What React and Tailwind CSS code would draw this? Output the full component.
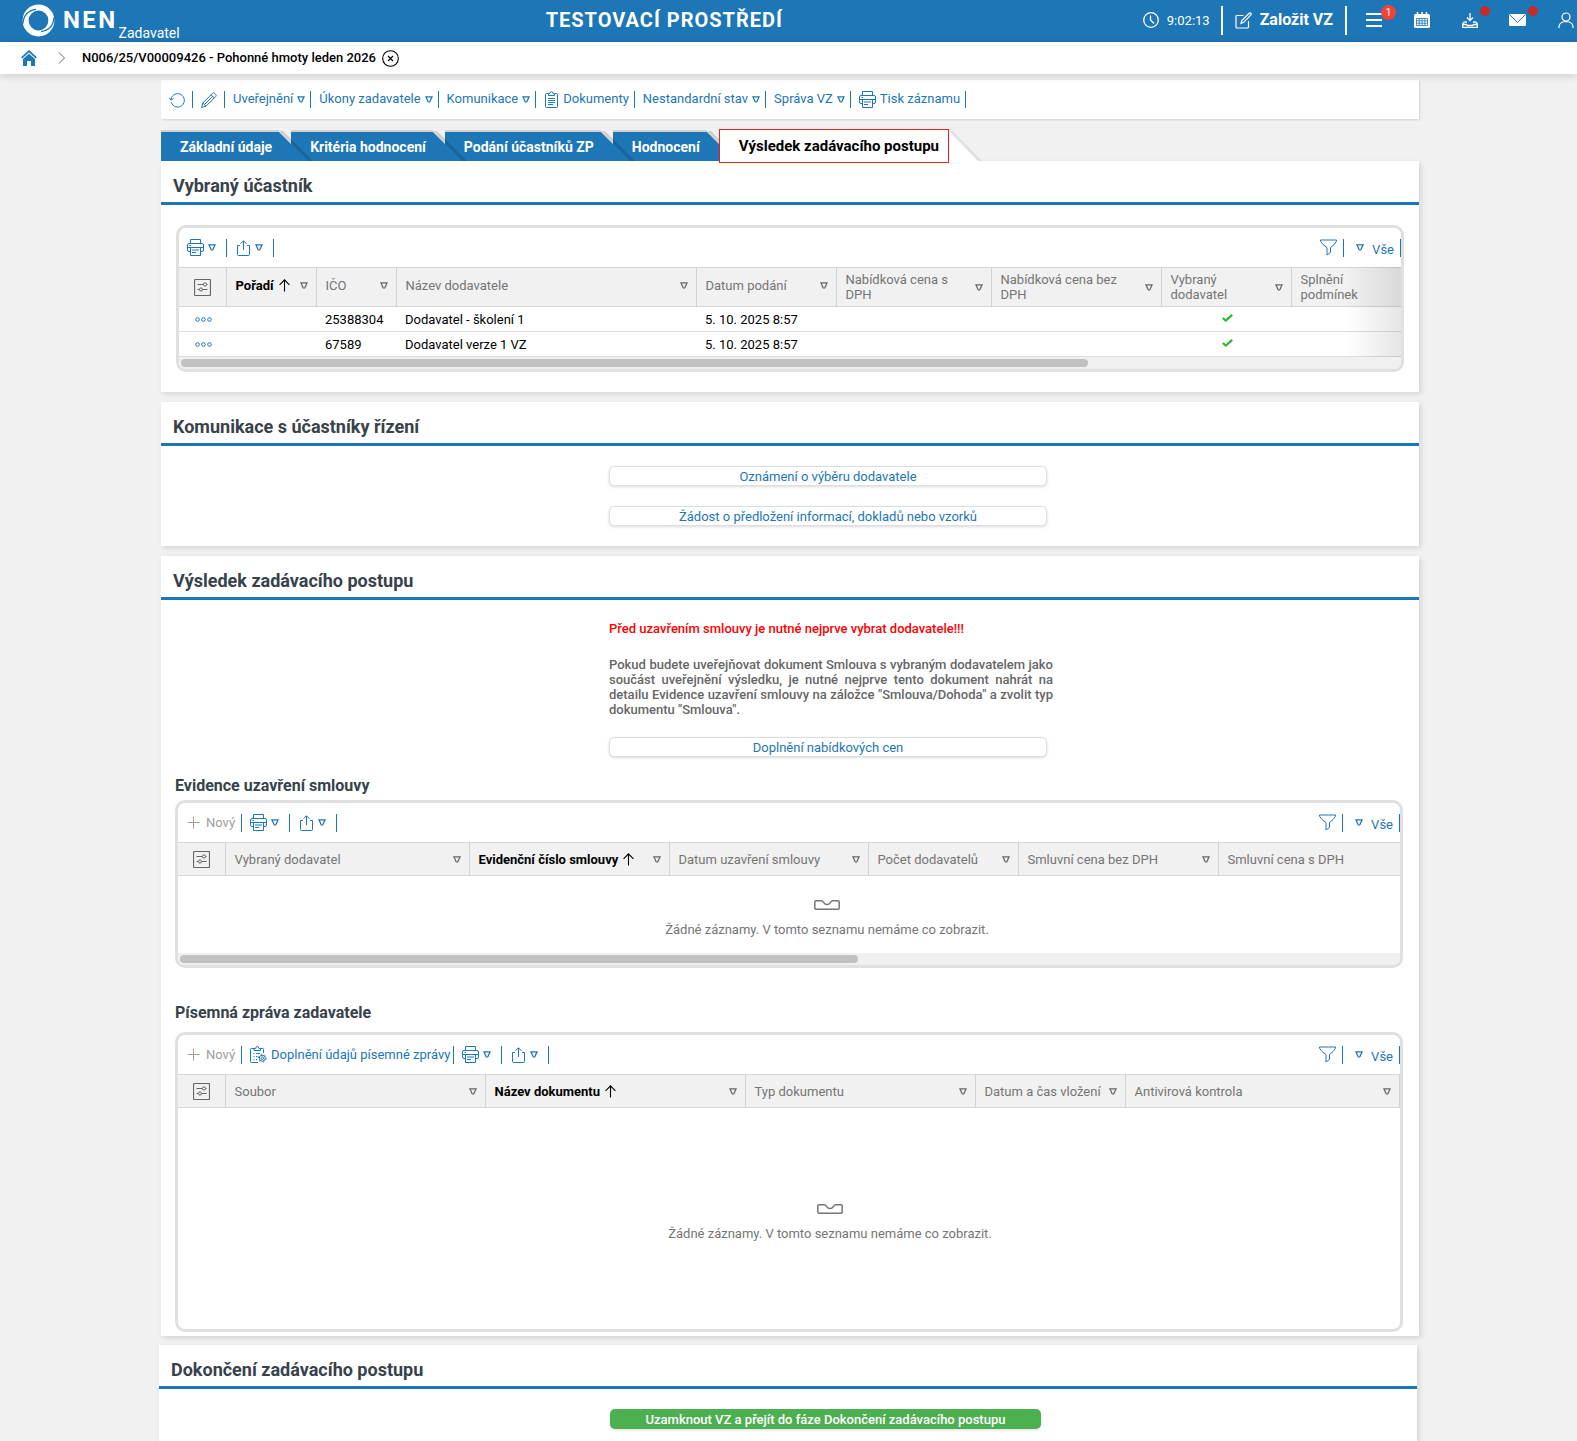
import React from 'react';
import clsx from 'clsx';


const Icon = ({ size = 'size-4', box = '0 0 16 16', children }) => (
  <svg className={clsx(size, 'shrink-0')} viewBox={box} fill="none" stroke="currentColor" strokeWidth="1" aria-hidden="true">
    {children}
  </svg>
)

const Triangle = () => (
  <Icon size="h-[7px] w-2" box="0 0 8 7">
    <path d="M.9 .8H7.1L4.9 5.6Q4 6.6 3.1 5.6Z" strokeWidth="1.2" />
  </Icon>
)

const PrintIcon = () => (
  <Icon size="size-[17px]" box="0 0 17 17">
    <path d="M3.5 5V.5H13.5V5M3.5 12.5H2A1.5 1.5 0 0 1 .5 11V6A1.5 1.5 0 0 1 2 4.5H15A1.5 1.5 0 0 1 16.5 6V11A1.5 1.5 0 0 1 15 12.5H13.5M1 8.5H16M3.5 8.5V16.5H13.5V8.5M5 11H12M5 13.5H9M2.5 6.5H4" />
  </Icon>
)

const ShareIcon = () => (
  <Icon>
    <path d="M5 5.5H2.5V14.5Q2.5 15.5 3.5 15.5H13.5Q14.5 15.5 14.5 14.5V5.5H12M8.5 10V.8M5.5 3.8L8.5 .8L11.5 3.8" />
  </Icon>
)

const FilterIcon = () => (
  <Icon size="size-[17px]" box="0 0 17 17">
    <path d="M.5 1H16.5V2.2Q15 5.5 10.5 8.5V13.5L7 16V8.5Q2 5.5 .5 2.2Z" />
  </Icon>
)

const SettingsIcon = () => (
  <Icon size="size-[17px]" box="0 0 17 17">
    <rect x=".5" y=".5" width="16" height="16" rx="1" strokeWidth="1.2" />
    <path d="M3.5 5.5H9.3M12.7 5.5H13.5M3.5 10.5H5.3M8.7 10.5H13.5" strokeWidth="1.2" />
    <circle cx="11" cy="5.5" r="1.6" />
    <circle cx="7" cy="10.5" r="1.6" />
  </Icon>
)

const DocIcon = () => (
  <Icon size="h-[17px] w-[15px]" box="0 0 15 17">
    <path d="M4 2.5H2.5Q1.5 2.5 1.5 3.5V15.5Q1.5 16.5 2.5 16.5H12.5Q13.5 16.5 13.5 15.5V3.5Q13.5 2.5 12.5 2.5H11M4.5 4.5V2.5H6Q6 .6 7.5 .6Q9 .6 9 2.5H10.5V4.5ZM4 7.5H11M4 9.5H11M4 11.5H11M4 13.5H9" />
  </Icon>
)

const DocGearIcon = () => (
  <Icon size="size-[17px]" box="0 0 17 17">
    <path d="M4 2.5H1.5Q.5 2.5 .5 3.5V15.5Q.5 16.5 1.5 16.5H8M11 2.5H12.8Q13.5 2.5 13.5 3.5V7M4 4.5V2.5H5.5Q5.8 .6 7.2 .6Q8.6 .6 9 2.5H10.5V4.5ZM3.5 7.5H4.5M6 7.5H10M3.5 10.5H4.5M6 10.5H7.5M3.5 13.5H4.5M6 13.5H7" />
    <circle cx="12.3" cy="12.2" r="1.3" />
    <circle cx="12.3" cy="12.2" r="3" />
    <circle cx="12.3" cy="12.2" r="3.9" strokeDasharray="1.6 2.48" />
  </Icon>
)

const PlusIcon = () => (
  <Icon size="size-[13px]" box="0 0 13 13">
    <path d="M6.5 .5V12.5M.5 6.5H12.5" />
  </Icon>
)

const UpArrow = () => (
  <Icon size="h-[13px] w-[11px]" box="0 0 11 13">
    <path d="M5.5 12.5V1M.6 5.8L5.5 .9L10.4 5.8" strokeWidth="1.1" />
  </Icon>
)

const InboxIcon = () => (
  <Icon size="h-[10px] w-[26px]" box="0 0 26 10">
    <path d="M2 .8H7.5Q8.5 .8 9.5 2.3Q11 4.5 13 4.5Q15 4.5 16.5 2.3Q17.5 .8 18.5 .8H24Q25.2 .8 25.2 2V8Q25.2 9.2 24 9.2H2Q.8 9.2 .8 8V2Q.8 .8 2 .8Z" strokeWidth="1.5" />
  </Icon>
)

const CheckIcon = () => (
  <svg className="h-2 w-[11px]" viewBox="0 0 11 8" fill="none" stroke="#2db82d" strokeWidth="2.2" role="img" aria-label="Ano">
    <path d="M.8 4L3.8 6.6L10.2 .9" />
  </svg>
)

const DotsIcon = () => (
  <Icon size="h-[5px] w-[17px]" box="0 0 17 5">
    <circle cx="2.5" cy="2.5" r="1.8" />
    <circle cx="8.5" cy="2.5" r="1.8" />
    <circle cx="14.5" cy="2.5" r="1.8" />
  </Icon>
)


const Header = () => (
  <header className="flex h-[42px] items-center justify-between overflow-hidden bg-[#1d76b5] text-white">
    <div className="flex pl-[22px]">
      <svg className="mt-1 size-[33px]" viewBox="0 0 33 33" aria-hidden="true">
        <circle cx="16.5" cy="16.5" r="12.9" fill="none" stroke="#fff" strokeWidth="6" />
        <path d="M1 19.5C1.5 12 6 6.5 14 5.4M32 13.5C31.5 21 27 26.5 19 27.6" fill="none" stroke="#1d76b5" strokeWidth="1.3" />
      </svg>
      <span className="ml-2 mt-0.5 text-2xl font-bold leading-9 tracking-widest">NEN</span>
      <span className="ml-px mt-[23px] text-sm leading-5">Zadavatel</span>
    </div>
    <div className="pb-0.5 pl-1.5 text-xl font-bold tracking-wider">TESTOVACÍ PROSTŘEDÍ</div>
    <div className="-mr-[13px] flex items-center justify-end pb-0.5">
      <Icon>
        <circle cx="8" cy="8" r="7.3" strokeWidth="1.3" />
        <path d="M7.5 3.5V8L11 11.5" strokeWidth="1.3" />
      </Icon>
      <span className="ml-2 text-[13px]">9:02:13</span>
      <button className="ml-[11px] flex h-[29px] items-center gap-2 border-x-2 border-white px-3 text-base font-bold">
        <Icon size="size-[17px]" box="0 0 17 17">
          <path d="M8.5 3.5H2Q1 3.5 1 4.5V15Q1 16 2 16H12.5Q13.5 16 13.5 15V9M6 11.5L6.8 8.5L14.2 1.2Q15 .6 15.8 1.3Q16.6 2 15.9 2.9L8.7 10.3Z" strokeWidth="1.2" />
        </Icon>
        Založit VZ
      </button>
      <nav className="ml-[3px] flex">
        <button aria-label="Menu" className="relative flex w-12 items-center justify-center">
          <Icon><path d="M0 2H16M0 8H16M0 14H16" strokeWidth="2" /></Icon>
          <span className="absolute -top-[7px] right-0.5 size-[15px] rounded-full bg-[#f44336] text-center text-[10px] leading-[15px]">1</span>
        </button>
        <button aria-label="Kalendář" className="flex w-12 justify-center">
          <Icon>
            <rect x="0" y="2" width="16" height="14" rx="1.5" fill="currentColor" stroke="none" />
            <path d="M3.5 0V4M12.5 0V4M8 0V4" strokeWidth="1.5" />
            <path d="M2.5 6.5H13.5V13.5H2.5ZM2.5 8.8H13.5M2.5 11.2H13.5M5.2 6.5V13.5M8 6.5V13.5M10.8 6.5V13.5" stroke="#1d76b5" strokeWidth=".8" />
          </Icon>
        </button>
        <button aria-label="Stažené soubory" className="relative flex w-12 justify-center">
          <Icon>
            <path d="M8 1V8M5 5.5L8 8.5L11 5.5M5 10L2 10.2L.7 12V15.3H15.3V12L14 10.2L11 10M1 12.5H4.5L5.5 13.5H10.5L11.5 12.5H15" strokeWidth="1.3" />
          </Icon>
          <span className="absolute -top-1.5 right-1 size-2.5 rounded-full bg-[#c92a2a]" />
        </button>
        <button aria-label="Zprávy" className="relative flex w-12 items-center justify-center">
          <Icon size="h-3 w-[17px]" box="0 0 17 12">
            <rect width="17" height="12" rx="1.5" fill="currentColor" stroke="none" />
            <path d="M1 1L8.5 8.3L16 1" stroke="#1d76b5" />
          </Icon>
          <span className="absolute -top-1.5 right-1 size-2.5 rounded-full bg-[#c92a2a]" />
        </button>
        <button aria-label="Uživatel" className="flex w-12 justify-center">
          <Icon>
            <circle cx="8" cy="5" r="4" strokeWidth="1.2" />
            <path d="M1 16V14.5Q1.5 9.7 8 9.5Q14.5 9.7 15 14.5V16" strokeWidth="1.2" />
          </Icon>
        </button>
      </nav>
    </div>
  </header>
)

const Breadcrumb = () => (
  <nav className="relative flex h-8 items-center bg-white pl-[21px] shadow-[0_2px_8px_rgba(0,0,0,0.15)]">
    <a href="#" aria-label="Domů">
      <svg className="h-4 w-4" viewBox="0 0 16 16" aria-hidden="true">
        <path d="M.7 7.8L8 1.2L15.3 7.8" fill="none" stroke="#1d76b5" strokeWidth="1.8" />
        <path d="M2 9L8 3.8L14 9V16H10V11H6V16H2Z" fill="#1d76b5" />
      </svg>
    </a>
    <svg className="ml-[21px] h-3 w-2" viewBox="0 0 8 12" fill="none" stroke="#666" aria-hidden="true">
      <path d="M1 .5L6.5 6L1 11.5" />
    </svg>
    <span className="ml-4 pb-0.5 text-[13px] font-medium text-black">N006/25/V00009426 - Pohonné hmoty leden 2026</span>
    <button aria-label="Zavřít" className="ml-1.5">
      <Icon size="size-[17px]" box="0 0 17 17">
        <circle cx="8.5" cy="8.5" r="7.8" strokeWidth="1.1" />
        <path d="M6 6L11 11M11 6L6 11" strokeWidth="1.1" />
      </Icon>
    </button>
  </nav>
)

const actions = [
  {
    label: 'Obnovit', iconOnly: true,
    icon: <Icon><path d="M2.3 10.5A6.7 6.7 0 1 0 2 7.5M0 5.8L2 8.2L4.5 6.3" /></Icon>,
  },
  {
    label: 'Upravit', iconOnly: true,
    icon: <Icon><path d="M.6 15.5L1.8 11L11.5 1.3Q12.5 .3 13.7 1.4L14.6 2.3Q15.7 3.5 14.7 4.5L5 14.2ZM1.8 11L5 14.2M10 2.8L13.2 6M3.5 12.5L12 4" /></Icon>,
  },
  { label: 'Uveřejnění', menu: true },
  { label: 'Úkony zadavatele', menu: true },
  { label: 'Komunikace', menu: true },
  { label: 'Dokumenty', icon: <DocIcon /> },
  { label: 'Nestandardní stav', menu: true },
  { label: 'Správa VZ', menu: true },
  { label: 'Tisk záznamu', icon: <PrintIcon /> },
]

const ActionBar = () => (
  <div className="flex h-[39px] items-center bg-white text-[#1d76b5] shadow-[1px_1px_2px_rgba(0,0,0,0.12)]">
    {actions.map((action) => (
      <button
        key={action.label}
        aria-label={action.label}
        className={clsx('flex h-[17px] items-center gap-1 border-r border-[#1d76b5] pl-2', action.iconOnly ? 'pr-[7px]' : 'pr-[5px]')}
      >
        {action.icon}
        {!action.iconOnly && <span className="-mt-0.5">{action.label}</span>}
        {action.menu && <Triangle />}
      </button>
    ))}
  </div>
)

const Tabs = () => (
  <div role="tablist" className="flex h-8 items-end pt-px">
    {['Základní údaje', 'Kritéria hodnocení', 'Podání účastníků ZP', 'Hodnocení'].map((label) => (
      <button key={label} role="tab" aria-selected="false" className="flex h-[31px] font-bold text-white">
        <span className="border-t-2 border-[#d2d2d2] bg-[#1d76b5] pl-[19px] pr-[7px] pt-0.5 text-sm leading-[27px]">{label}</span>
        <svg className="relative z-10 -mr-[21px] h-[31px] w-[33px]" viewBox="0 0 33 31" aria-hidden="true">
          <path d="M0 1L4 1L33 30V31H29Z" fill="#000" fillOpacity=".14" />
          <path d="M0 2L29 31H0Z" fill="#1d76b5" />
        </svg>
      </button>
    ))}
    <button role="tab" aria-selected="true" className="relative z-20 -mb-0.5 h-[34px] border border-[#ed1c24] bg-white pl-[19px] pr-[9px] text-[15px] font-bold leading-8 text-black">
      Výsledek zadávacího postupu
    </button>
    <svg className="h-[31px] w-[33px]" viewBox="0 0 33 31" aria-hidden="true">
      <path d="M0 0L3 1L33 31H29Z" fill="#dedede" />
      <path d="M0 2L29 31H0Z" fill="#fff" />
    </svg>
  </div>
)

const Card = ({ title, className, children }) => (
  <section className={clsx('bg-white shadow-[2px_2px_5px_rgba(0,0,0,0.12)]', className)}>
    <h2 className="border-b-[3px] border-[#1d76b5] px-3 pb-0.5 pt-2.5 text-lg font-bold leading-[29px] text-[#37424a]">{title}</h2>
    {children}
  </section>
)

const LinkButton = ({ children }) => (
  <button className="block h-5 w-full rounded-[5px] border border-[#dedede] bg-white pt-px font-normal leading-[18px] text-[#1d76b5] shadow-[0_1px_3px_rgba(0,0,0,0.14)]">
    {children}
  </button>
)

const tool = 'flex h-[18px] items-center gap-1 border-r border-[#1d76b5] pl-2'

const Grid = ({ name, columns, canAdd, extra, tall, children, footer }) => (
  <div className="relative overflow-hidden rounded-[10px] border-[3px] border-[#e0e0e0]">
    <div className="flex h-[39px] items-center justify-between text-[#1d76b5]">
      <div className="flex">
        {canAdd && (
          <button disabled className="flex h-[18px] items-center gap-1.5 border-r border-[#1d76b5] pl-[9px] pr-1.5 text-[#9e9e9e]">
            <PlusIcon />Nový
          </button>
        )}
        {extra && <button className={clsx(tool, 'pr-[3px]')}><DocGearIcon />{extra}</button>}
        <button aria-label="Tisk" className={clsx(tool, 'pr-2.5')}><PrintIcon /><Triangle /></button>
        <button aria-label="Export" className={clsx(tool, 'pr-2.5')}><ShareIcon /><Triangle /></button>
      </div>
      <div className="flex">
        <button aria-label="Filtr" className={clsx(tool, 'pr-1.5')}><FilterIcon /></button>
        <button className="flex h-[18px] items-center gap-2 border-r border-[#1d76b5] pl-3 pr-1.5">
          <Triangle /><span className="pt-[3px]">Vše</span>
        </button>
      </div>
    </div>
    <table aria-label={name} className="w-full table-fixed border-collapse text-left">
      <thead className="border-y border-[#d6d6d6] bg-[#f1f1f1] text-[#757575]">
        <tr className={tall ? 'h-[39px]' : 'h-[33px]'}>
          <th className="w-[47px] border-r border-[#d2d2d2] pl-px text-[#666]">
            <button aria-label="Nastavení sloupců" className="mx-auto block"><SettingsIcon /></button>
          </th>
          {columns.map((col) => (
            <th
              key={col.label}
              className={clsx('border-[#d2d2d2] pl-[9px] pr-2 font-normal', col.width, !col.open && 'border-r', tall && !col.wrap && 'pb-1')}
            >
              <div className={clsx('flex items-center', col.sorted && 'font-bold text-black')}>
                <span className={clsx('leading-[15px]', col.wrap)}>{col.label}</span>
                {col.sorted && <span className="ml-[5px]"><UpArrow /></span>}
                {!col.open && <button aria-label={'Filtrovat ' + col.label} className="ml-auto text-[#666]"><Triangle /></button>}
              </div>
            </th>
          ))}
        </tr>
      </thead>
      {children}
    </table>
    {footer}
  </div>
)

const ScrollBar = ({ width }) => (
  <div className="h-3 bg-[#f0f0f0] px-0.5 pt-0.5">
    <div className={clsx('h-2 rounded-full bg-[#c1c1c1]', width)} />
  </div>
)

const Empty = ({ className }) => (
  <div className={clsx('flex flex-col items-center justify-center gap-3 pt-2 text-[#757575]', className)}>
    <InboxIcon />
    <p>Žádné záznamy. V tomto seznamu nemáme co zobrazit.</p>
  </div>
)

const bidderColumns = [
  { label: 'Pořadí', width: 'w-[90px]', sorted: true },
  { label: 'IČO', width: 'w-20' },
  { label: 'Název dodavatele', width: 'w-[300px]' },
  { label: 'Datum podání', width: 'w-[140px]' },
  { label: 'Nabídková cena s DPH', width: 'w-[155px]', wrap: 'w-[110px]' },
  { label: 'Nabídková cena bez DPH', width: 'w-[170px]', wrap: 'w-[125px]' },
  { label: 'Vybraný dodavatel', width: 'w-[130px]', wrap: 'w-[70px]' },
  { label: 'Splnění podmínek', open: true, wrap: 'w-[70px]' },
]

const contractColumns = [
  { label: 'Vybraný dodavatel', width: 'w-[244px]' },
  { label: 'Evidenční číslo smlouvy', width: 'w-[200px]', sorted: true },
  { label: 'Datum uzavření smlouvy', width: 'w-[199px]' },
  { label: 'Počet dodavatelů', width: 'w-[150px]' },
  { label: 'Smluvní cena bez DPH', width: 'w-[200px]' },
  { label: 'Smluvní cena s DPH', open: true },
]

const reportColumns = [
  { label: 'Soubor', width: 'w-[260px]' },
  { label: 'Název dokumentu', width: 'w-[260px]', sorted: true },
  { label: 'Typ dokumentu', width: 'w-[230px]' },
  { label: 'Datum a čas vložení', width: 'w-[150px]' },
  { label: 'Antivirová kontrola' },
]

const bidders = [
  { ico: '25388304', name: 'Dodavatel - školení 1', date: '5. 10. 2025 8:57' },
  { ico: '67589', name: 'Dodavatel verze 1 VZ', date: '5. 10. 2025 8:57' },
]

const App = () => {
  return (
    <div className="min-h-screen overflow-hidden bg-[#f1f1f1] font-['Roboto','Liberation_Sans',sans-serif] text-[13px] leading-[15px]">
      <Header />
      <Breadcrumb />

      <main className="pl-[161px] pr-[158px] pt-1.5">
        <ActionBar />
        <div className="pt-2.5">
          <Tabs />
        </div>

        <Card title="Vybraný účastník">
          <div className="px-[15px] py-5">
            <Grid
              name="Vybraný účastník"
              columns={bidderColumns}
              tall
              footer={
                <>
                  <ScrollBar width="w-[74.5%]" />
                  <div className="pointer-events-none absolute bottom-3 right-0 top-[39px] w-14 bg-linear-to-r from-transparent to-black/10" />
                </>
              }
            >
              <tbody className="text-black">
                {bidders.map((row) => (
                  <tr key={row.ico} className="h-[25px] border-b border-[#dedede]">
                    <td className="pl-px text-[#1d76b5]"><button aria-label="Akce" className="mx-auto block"><DotsIcon /></button></td>
                    <td />
                    <td className="pl-[9px]">{row.ico}</td>
                    <td className="pl-[9px]">{row.name}</td>
                    <td className="pl-[9px]">{row.date}</td>
                    <td />
                    <td />
                    <td><div className="flex justify-center pb-0.5 pl-0.5"><CheckIcon /></div></td>
                    <td />
                  </tr>
                ))}
              </tbody>
            </Grid>
          </div>
        </Card>

        <Card title="Komunikace s účastníky řízení" className="mt-2.5">
          <div className="grid grid-cols-[448fr_438fr_372fr] py-5">
            <div className="col-start-2 flex flex-col gap-5">
              <LinkButton>Oznámení o výběru dodavatele</LinkButton>
              <LinkButton>Žádost o předložení informací, dokladů nebo vzorků</LinkButton>
            </div>
          </div>
        </Card>

        <Card title="Výsledek zadávacího postupu" className="mt-2.5">
          <div className="grid grid-cols-[448fr_438fr_372fr] pb-[19px] pt-[21px] font-medium">
            <div className="col-start-2">
              <p className="text-[#ff0000]">Před uzavřením smlouvy je nutné nejprve vybrat dodavatele!!!</p>
              <p className="-mr-1.5 mb-5 mt-[21px] text-justify text-[#666]">
                Pokud budete uveřejňovat dokument Smlouva s vybraným dodavatelem jako součást uveřejnění
                výsledku, je nutné nejprve tento dokument nahrát na detailu Evidence uzavření smlouvy na
                záložce "Smlouva/Dohoda" a zvolit typ dokumentu "Smlouva".
              </p>
              <LinkButton>Doplnění nabídkových cen</LinkButton>
            </div>
          </div>

          <div className="pb-1 pl-3.5 pr-4">
            <h3 className="pb-1 text-base font-bold leading-5 text-[#37424a]">Evidence uzavření smlouvy</h3>
            <Grid
              name="Evidence uzavření smlouvy"
              columns={contractColumns}
              canAdd
              footer={
                <>
                  <Empty className="h-[77px] pl-[76px]" />
                  <ScrollBar width="w-[55.7%]" />
                </>
              }
            />
            <h3 className="pb-[9px] pt-[35px] text-base font-bold leading-5 text-[#37424a]">Písemná zpráva zadavatele</h3>
            <Grid
              name="Písemná zpráva zadavatele"
              columns={reportColumns}
              canAdd
              extra="Doplnění údajů písemné zprávy"
              footer={<Empty className="h-[221px] pl-[82px]" />}
            />
          </div>
        </Card>

        <Card title="Dokončení zadávacího postupu" className="-ml-0.5 mr-0.5 mt-[9px]">
          <div className="grid grid-cols-[451fr_431fr_376fr] pb-3 pt-5">
            <button className="col-start-2 h-5 rounded-[5px] bg-[#4caf50] font-medium text-white shadow-[0_1px_3px_rgba(0,0,0,0.14)]">
              Uzamknout VZ a přejít do fáze Dokončení zadávacího postupu
            </button>
          </div>
        </Card>
      </main>
    </div>
  )
}

export default App;
